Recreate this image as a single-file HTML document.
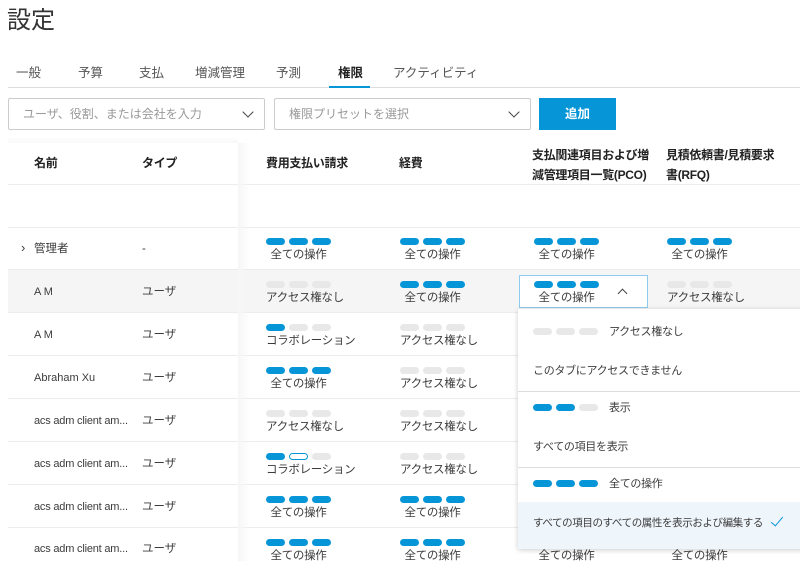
<!DOCTYPE html>
<html><head><meta charset="utf-8"><style>
*{box-sizing:border-box;margin:0;padding:0}
body{width:800px;height:561px;overflow:hidden;background:#fff;font-family:"Liberation Sans","Noto Sans CJK JP",sans-serif;color:#3c3c3c;position:relative;font-size:11.5px;line-height:14px}
.a{position:absolute;white-space:nowrap}
.tab{position:absolute;top:66px;font-size:12.5px;color:#555}
.inp{position:absolute;top:98px;height:32px;border:1px solid #ccc;border-radius:2px;color:#999;font-size:12px;padding:8px 0 0 14px;line-height:14px}
.chev{position:absolute;right:12px;top:9px;width:8px;height:8px;border-right:1.5px solid #444;border-bottom:1.5px solid #444;transform:rotate(45deg)}
.hd{position:absolute;font-weight:bold;font-size:12px;color:#222;line-height:20px;letter-spacing:-0.3px}
.hl{position:absolute;left:8px;right:0;height:1px;background:#ececec}
.cell{position:absolute;display:inline-block}
.p{display:flex;gap:4px;height:7px;margin-bottom:3px}
.p i{display:block;width:19px;height:7px;border-radius:4px;background:#e8e8e8}
.p i.b{background:#0696d7}
.p i.o{background:#fff;border:1px solid #0696d7}
.cell span{display:block;text-align:center;font-size:11.5px;line-height:14px;letter-spacing:-0.3px}
.nm{position:absolute;left:34px;font-size:11px;line-height:14px}
.ty{position:absolute;left:142px;font-size:11.5px;line-height:14px}
</style></head><body>
<div class="a" style="left:7px;top:6px;font-size:24px;line-height:30px;color:#333">設定</div>
<div class="tab" style="left:16px">一般</div>
<div class="tab" style="left:78px">予算</div>
<div class="tab" style="left:139px">支払</div>
<div class="tab" style="left:195px">増減管理</div>
<div class="tab" style="left:276px">予測</div>
<div class="tab" style="left:338px;font-weight:bold;color:#222">権限</div>
<div class="tab" style="left:393px">アクティビティ</div>
<div class="a" style="left:8px;top:87px;width:792px;height:1px;background:#ddd"></div>
<div class="a" style="left:329px;top:86px;width:41px;height:2px;background:#0696d7"></div>
<div class="inp" style="left:8px;width:257px">ユーザ、役割、または会社を入力<div class="chev"></div></div>
<div class="inp" style="left:274px;width:257px">権限プリセットを選択<div class="chev"></div></div>
<div class="a" style="left:539px;top:98px;width:77px;height:32px;background:#0696d7;color:#fff;font-weight:bold;font-size:12.5px;text-align:center;line-height:32px">追加</div>

<div class="a" style="left:8px;top:270px;width:792px;height:42px;background:#f5f5f5"></div>
<div class="hl" style="top:184px"></div>
<div class="hl" style="top:227px"></div>
<div class="hl" style="top:269px"></div>
<div class="hl" style="top:312px"></div>
<div class="hl" style="top:355px"></div>
<div class="hl" style="top:398px"></div>
<div class="hl" style="top:441px"></div>
<div class="hl" style="top:484px"></div>
<div class="hl" style="top:527px"></div>
<div class="a" style="left:238px;top:143px;width:12px;height:418px;background:linear-gradient(to right,#f6f6f6,rgba(255,255,255,0))"></div>
<div class="a" style="left:8px;top:137px;width:230px;height:6px;background:linear-gradient(to bottom,#fff,#f8f8f8)"></div>

<div class="hd" style="left:34px;top:153px">名前</div>
<div class="hd" style="left:142px;top:153px">タイプ</div>
<div class="hd" style="left:266px;top:153px">費用支払い請求</div>
<div class="hd" style="left:399px;top:153px">経費</div>
<div class="hd" style="left:532px;top:145px">支払関連項目および増<br>減管理項目一覧(PCO)</div>
<div class="hd" style="left:666px;top:145px">見積依頼書/見積要求<br>書(RFQ)</div>

<div class="a" style="left:21px;top:241px;font-size:13px">›</div>
<div class="nm" style="top:242px;font-size:11.5px">管理者</div><div class="ty" style="top:242px">-</div>
<div class="nm" style="top:285px">A M</div><div class="ty" style="top:285px">ユーザ</div>
<div class="nm" style="top:328px">A M</div><div class="ty" style="top:328px">ユーザ</div>
<div class="nm" style="top:371px">Abraham Xu</div><div class="ty" style="top:371px">ユーザ</div>
<div class="nm" style="top:414px;letter-spacing:-0.2px">acs adm client am...</div><div class="ty" style="top:414px">ユーザ</div>
<div class="nm" style="top:457px;letter-spacing:-0.2px">acs adm client am...</div><div class="ty" style="top:457px">ユーザ</div>
<div class="nm" style="top:500px;letter-spacing:-0.2px">acs adm client am...</div><div class="ty" style="top:500px">ユーザ</div>
<div class="nm" style="top:542px;letter-spacing:-0.2px">acs adm client am...</div><div class="ty" style="top:542px">ユーザ</div>

<div class="cell" style="left:266px;top:238px"><div class="p"><i class="b"></i><i class="b"></i><i class="b"></i></div><span>全ての操作</span></div>
<div class="cell" style="left:400px;top:238px"><div class="p"><i class="b"></i><i class="b"></i><i class="b"></i></div><span>全ての操作</span></div>
<div class="cell" style="left:534px;top:238px"><div class="p"><i class="b"></i><i class="b"></i><i class="b"></i></div><span>全ての操作</span></div>
<div class="cell" style="left:667px;top:238px"><div class="p"><i class="b"></i><i class="b"></i><i class="b"></i></div><span>全ての操作</span></div>

<div class="cell" style="left:266px;top:281px"><div class="p"><i></i><i></i><i></i></div><span>アクセス権なし</span></div>
<div class="cell" style="left:400px;top:281px"><div class="p"><i class="b"></i><i class="b"></i><i class="b"></i></div><span>全ての操作</span></div>
<div class="a" style="left:519px;top:275px;width:129px;height:33px;border:1px solid #8ecbee;background:#fff"></div>
<div class="cell" style="left:534px;top:281px"><div class="p"><i class="b"></i><i class="b"></i><i class="b"></i></div><span>全ての操作</span></div>
<div class="a" style="left:619px;top:290px;width:7px;height:7px;border-left:1.5px solid #444;border-top:1.5px solid #444;transform:rotate(45deg)"></div>
<div class="cell" style="left:667px;top:281px"><div class="p"><i></i><i></i><i></i></div><span>アクセス権なし</span></div>

<div class="cell" style="left:266px;top:324px"><div class="p"><i class="b"></i><i></i><i></i></div><span>コラボレーション</span></div>
<div class="cell" style="left:400px;top:324px"><div class="p"><i></i><i></i><i></i></div><span>アクセス権なし</span></div>
<div class="cell" style="left:266px;top:367px"><div class="p"><i class="b"></i><i class="b"></i><i class="b"></i></div><span>全ての操作</span></div>
<div class="cell" style="left:400px;top:367px"><div class="p"><i></i><i></i><i></i></div><span>アクセス権なし</span></div>
<div class="cell" style="left:266px;top:410px"><div class="p"><i></i><i></i><i></i></div><span>アクセス権なし</span></div>
<div class="cell" style="left:400px;top:410px"><div class="p"><i></i><i></i><i></i></div><span>アクセス権なし</span></div>
<div class="cell" style="left:266px;top:453px"><div class="p"><i class="b"></i><i class="o"></i><i></i></div><span>コラボレーション</span></div>
<div class="cell" style="left:400px;top:453px"><div class="p"><i></i><i></i><i></i></div><span>アクセス権なし</span></div>
<div class="cell" style="left:266px;top:496px"><div class="p"><i class="b"></i><i class="b"></i><i class="b"></i></div><span>全ての操作</span></div>
<div class="cell" style="left:400px;top:496px"><div class="p"><i class="b"></i><i class="b"></i><i class="b"></i></div><span>全ての操作</span></div>
<div class="cell" style="left:266px;top:539px"><div class="p"><i class="b"></i><i class="b"></i><i class="b"></i></div><span>全ての操作</span></div>
<div class="cell" style="left:400px;top:539px"><div class="p"><i class="b"></i><i class="b"></i><i class="b"></i></div><span>全ての操作</span></div>
<div class="cell" style="left:534px;top:539px"><div class="p"><i class="b"></i><i class="b"></i><i class="b"></i></div><span>全ての操作</span></div>
<div class="cell" style="left:667px;top:539px"><div class="p"><i class="b"></i><i class="b"></i><i class="b"></i></div><span>全ての操作</span></div>

<div class="a" style="left:518px;top:309px;width:290px;height:240px;background:#fff;box-shadow:0 1px 5px rgba(0,0,0,0.2);font-size:11px;letter-spacing:-0.3px">
  <div class="a" style="left:15px;top:19px"><div class="p" style="margin:0"><i></i><i></i><i></i></div></div>
  <div class="a" style="left:91px;top:16px">アクセス権なし</div>
  <div class="a" style="left:15px;top:55px">このタブにアクセスできません</div>
  <div class="a" style="left:0;top:82px;width:290px;height:1px;background:#ddd"></div>
  <div class="a" style="left:15px;top:95px"><div class="p" style="margin:0"><i class="b"></i><i class="b"></i><i></i></div></div>
  <div class="a" style="left:91px;top:92px">表示</div>
  <div class="a" style="left:15px;top:131px">すべての項目を表示</div>
  <div class="a" style="left:0;top:158px;width:290px;height:1px;background:#ddd"></div>
  <div class="a" style="left:15px;top:171px"><div class="p" style="margin:0"><i class="b"></i><i class="b"></i><i class="b"></i></div></div>
  <div class="a" style="left:91px;top:168px">全ての操作</div>
  <div class="a" style="left:0;top:193px;width:290px;height:47px;background:#eef5fb"></div>
  <div class="a" style="left:15px;top:207px;font-size:10.5px;letter-spacing:-0.4px">すべての項目のすべての属性を表示および編集する</div>
  <div class="a" style="left:256px;top:205px;width:6px;height:12px;border-right:1.5px solid #0696d7;border-bottom:1.5px solid #0696d7;transform:rotate(40deg)"></div>
</div>
</body></html>
